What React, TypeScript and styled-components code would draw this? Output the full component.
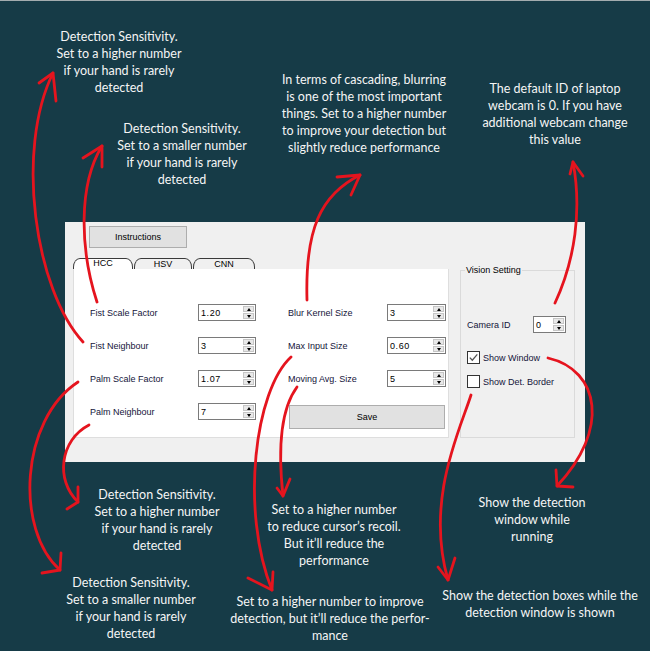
import React from "react";
import styled, { createGlobalStyle } from "styled-components";

const Global = createGlobalStyle`
  html, body { margin: 0; padding: 0; background: #163b47; }
  #root { width: 650px; height: 651px; }
`;

const Page = styled.div`
  position: relative;
  width: 650px;
  height: 651px;
  box-sizing: border-box;
  padding: 222px 0 0 65px;
  background: #163b47;
  box-shadow: inset 0 1px 0 #a3acaf;
  overflow: hidden;
`;

const Window = styled.div`
  width: 520px;
  height: 240px;
  box-sizing: border-box;
  padding: 4px 0 0 8px;
  background: #f0f0f0;
  font-family: "Liberation Sans", Arial, sans-serif;
  font-size: 9px;
  color: #14143a;
`;

const PushButton = styled.div<{ $w: number; $h: number }>`
  width: ${(p) => p.$w}px;
  height: ${(p) => p.$h}px;
  box-sizing: border-box;
  background: #e1e1e1;
  border: 1px solid #adadad;
  color: #000;
  display: flex;
  align-items: center;
  justify-content: center;
`;

const InstrButton = styled(PushButton)`
  margin-left: 16px;
`;

const SaveButton = styled(PushButton)`
  margin: 2px 0 0 1px;
`;

const MainRow = styled.div`
  display: flex;
  align-items: flex-start;
  gap: 11px;
  margin-top: 10px;
`;

const TabWidget = styled.div`
  width: 376px;
  display: flex;
  flex-direction: column;
`;

const TabBar = styled.div`
  display: flex;
  height: 11px;
  gap: 1px;
`;

const Tab = styled.div<{ $w: number; $active?: boolean }>`
  width: ${(p) => p.$w}px;
  height: 11px;
  box-sizing: border-box;
  border: 1px solid #3a3a3a;
  border-bottom: none;
  border-radius: 7px 7px 0 0 / 9px 9px 0 0;
  background: ${(p) => (p.$active ? "#fff" : "#f0f0f0")};
  color: #000;
  text-align: center;
  line-height: ${(p) => (p.$active ? 9 : 11)}px;
`;

const TabPanel = styled.div`
  height: 169px;
  box-sizing: border-box;
  background: #fff;
  border: 1px solid #dedede;
  border-top: none;
  display: flex;
  gap: 32px;
  padding: 35px 0 0 16px;
`;

const Column = styled.div`
  display: flex;
  flex-direction: column;
  gap: 16px;
`;

const Row = styled.div`
  display: flex;
  align-items: center;
  height: 17px;
`;

const Label = styled.span<{ $w: number }>`
  width: ${(p) => p.$w}px;
  flex-shrink: 0;
  white-space: nowrap;
`;

const SpinBox = styled.div<{ $w: number }>`
  width: ${(p) => p.$w}px;
  height: 17px;
  box-sizing: border-box;
  border: 1px solid #7a7a7a;
  background: #fff;
  display: flex;
`;

const SpinValue = styled.span`
  flex: 1;
  padding-left: 2px;
  display: flex;
  align-items: center;
  color: #000;
  letter-spacing: 0.6px;
`;

const SpinButtons = styled.div`
  width: 12px;
  box-sizing: border-box;
  padding: 1px 1px 1px 0;
  display: flex;
  flex-direction: column;
  gap: 1px;
`;

const SpinBtn = styled.span`
  flex: 1;
  background: #e8e8e8;
  border: 1px solid #c6c6c6;
  display: flex;
  align-items: center;
  justify-content: center;
`;

const Tri = styled.span<{ $down?: boolean }>`
  width: 0;
  height: 0;
  border-left: 2.5px solid transparent;
  border-right: 2.5px solid transparent;
  ${(p) =>
    p.$down ? "border-top: 3px solid #000;" : "border-bottom: 3px solid #000;"}
`;

const GroupBox = styled.div`
  position: relative;
  margin-top: 12px;
  width: 115px;
  height: 168px;
  box-sizing: border-box;
  border: 1px solid #dadada;
  padding: 45px 0 0 6px;
`;

const GroupTitle = styled.span`
  position: absolute;
  top: -6px;
  left: 4px;
  padding: 0 1px;
  background: #f0f0f0;
  line-height: 11px;
  color: #000;
`;

const CheckRow = styled.div<{ $mt: number }>`
  display: flex;
  align-items: center;
  gap: 3px;
  height: 13px;
  margin-top: ${(p) => p.$mt}px;
`;

const Box = styled.span`
  width: 13px;
  height: 13px;
  box-sizing: border-box;
  border: 1px solid #333;
  background: #fff;
  display: flex;
  align-items: center;
  justify-content: center;
`;

const Note = styled.div<{ $x: number; $y: number }>`
  position: absolute;
  left: ${(p) => p.$x}px;
  top: ${(p) => p.$y}px;
  transform: translateX(-50%);
  text-align: center;
  white-space: nowrap;
  color: #f5f5f5;
  font-family: Lato, "Open Sans", sans-serif;
  font-size: 12.5px;
  line-height: 17px;
`;

const Overlay = styled.svg`
  position: absolute;
  left: 0;
  top: 0;
  width: 650px;
  height: 651px;
  pointer-events: none;
`;

const Spin = ({ w, v }: { w: number; v: string }) => (
  <SpinBox $w={w}>
    <SpinValue>{v}</SpinValue>
    <SpinButtons>
      <SpinBtn>
        <Tri />
      </SpinBtn>
      <SpinBtn>
        <Tri $down />
      </SpinBtn>
    </SpinButtons>
  </SpinBox>
);

const notes: { x: number; y: number; lines: string[] }[] = [
  { x: 119, y: 28, lines: ["Detection Sensitivity.", "Set to a higher number", "if your hand is rarely", "detected"] },
  { x: 182, y: 120, lines: ["Detection Sensitivity.", "Set to a smaller number", "if your hand is rarely", "detected"] },
  {
    x: 364,
    y: 71,
    lines: [
      "In terms of cascading, blurring",
      "is one of the most important",
      "things. Set to a higher number",
      "to improve your detection but",
      "slightly reduce performance",
    ],
  },
  { x: 555, y: 80, lines: ["The default ID of laptop", "webcam is 0. If you have", "additional webcam change", "this value"] },
  { x: 157, y: 486, lines: ["Detection Sensitivity.", "Set to a higher number", "if your hand is rarely", "detected"] },
  { x: 131, y: 574, lines: ["Detection Sensitivity.", "Set to a smaller number", "if your hand is rarely", "detected"] },
  { x: 334, y: 501, lines: ["Set to a higher number", "to reduce cursor’s recoil.", "But it’ll reduce the", "performance"] },
  { x: 330, y: 593, lines: ["Set to a higher number to improve", "detection, but it’ll reduce the perfor-", "mance"] },
  { x: 532, y: 494, lines: ["Show the detection", "window while", "running"] },
  { x: 540, y: 587, lines: ["Show the detection boxes while the", "detection window is shown"] },
];

const arrows: { d: string; head: string }[] = [
  { d: "M83 342 C35 290 15 150 53 73", head: "M39 83 L53 73 L56 101" },
  { d: "M97 302 C80 250 78 185 102 146", head: "M83 158 L102 146 L102 167" },
  { d: "M78 382 C20 420 15 530 60 570", head: "M61 553 L60 570 L42 573" },
  { d: "M89 425 C60 440 55 480 78 502", head: "M78 487 L78 502 L67 509" },
  { d: "M307 300 C305 230 320 195 360 175", head: "M337 177 L360 175 L351 195" },
  { d: "M291 357 C255 390 240 510 272 590", head: "M273 572 L272 590 L248 578" },
  { d: "M297 387 C280 410 278 450 283 496", head: "M277 488 L283 496 L290 479" },
  { d: "M555 303 C575 260 582 210 573 162", head: "M570 174 L573 162 L583 176" },
  { d: "M548 358 C600 370 610 430 557 486", head: "M556 470 L557 486 L573 487" },
  { d: "M471 395 C460 430 425 500 448 580", head: "M438 567 L448 580 L455 558" },
];

export default function App() {
  return (
    <>
      <Global />
      <Page>
        <Window>
          <InstrButton $w={98} $h={22}>
            Instructions
          </InstrButton>
          <MainRow>
            <TabWidget>
              <TabBar>
                <Tab $w={60} $active>
                  HCC
                </Tab>
                <Tab $w={58}>HSV</Tab>
                <Tab $w={62}>CNN</Tab>
              </TabBar>
              <TabPanel>
                <Column>
                  <Row>
                    <Label $w={108}>Fist Scale Factor</Label>
                    <Spin w={58} v="1.20" />
                  </Row>
                  <Row>
                    <Label $w={108}>Fist Neighbour</Label>
                    <Spin w={58} v="3" />
                  </Row>
                  <Row>
                    <Label $w={108}>Palm Scale Factor</Label>
                    <Spin w={58} v="1.07" />
                  </Row>
                  <Row>
                    <Label $w={108}>Palm Neighbour</Label>
                    <Spin w={58} v="7" />
                  </Row>
                </Column>
                <Column>
                  <Row>
                    <Label $w={99}>Blur Kernel Size</Label>
                    <Spin w={59} v="3" />
                  </Row>
                  <Row>
                    <Label $w={99}>Max Input Size</Label>
                    <Spin w={59} v="0.60" />
                  </Row>
                  <Row>
                    <Label $w={99}>Moving Avg. Size</Label>
                    <Spin w={59} v="5" />
                  </Row>
                  <SaveButton $w={156} $h={24}>
                    Save
                  </SaveButton>
                </Column>
              </TabPanel>
            </TabWidget>
            <GroupBox>
              <GroupTitle>Vision Setting</GroupTitle>
              <Row>
                <Label $w={66}>Camera ID</Label>
                <Spin w={33} v="0" />
              </Row>
              <CheckRow $mt={18}>
                <Box>
                  <svg width="11" height="11" viewBox="0 0 11 11">
                    <path d="M1.8 5.6 L4.3 8.2 L9.3 2.4" fill="none" stroke="#555" strokeWidth="1.3" />
                  </svg>
                </Box>
                <span>Show Window</span>
              </CheckRow>
              <CheckRow $mt={11}>
                <Box />
                <span>Show Det. Border</span>
              </CheckRow>
            </GroupBox>
          </MainRow>
        </Window>

        {notes.map((n, i) => (
          <Note key={i} $x={n.x} $y={n.y}>
            {n.lines.map((l, j) => (
              <div key={j}>{l}</div>
            ))}
          </Note>
        ))}

        <Overlay viewBox="0 0 650 651">
          {arrows.map((a, i) => (
            <g key={i} fill="none" stroke="#e5141e" strokeWidth="2.8" strokeLinecap="round" strokeLinejoin="round">
              <path d={a.d} />
              <path d={a.head} />
            </g>
          ))}
        </Overlay>
      </Page>
    </>
  );
}
